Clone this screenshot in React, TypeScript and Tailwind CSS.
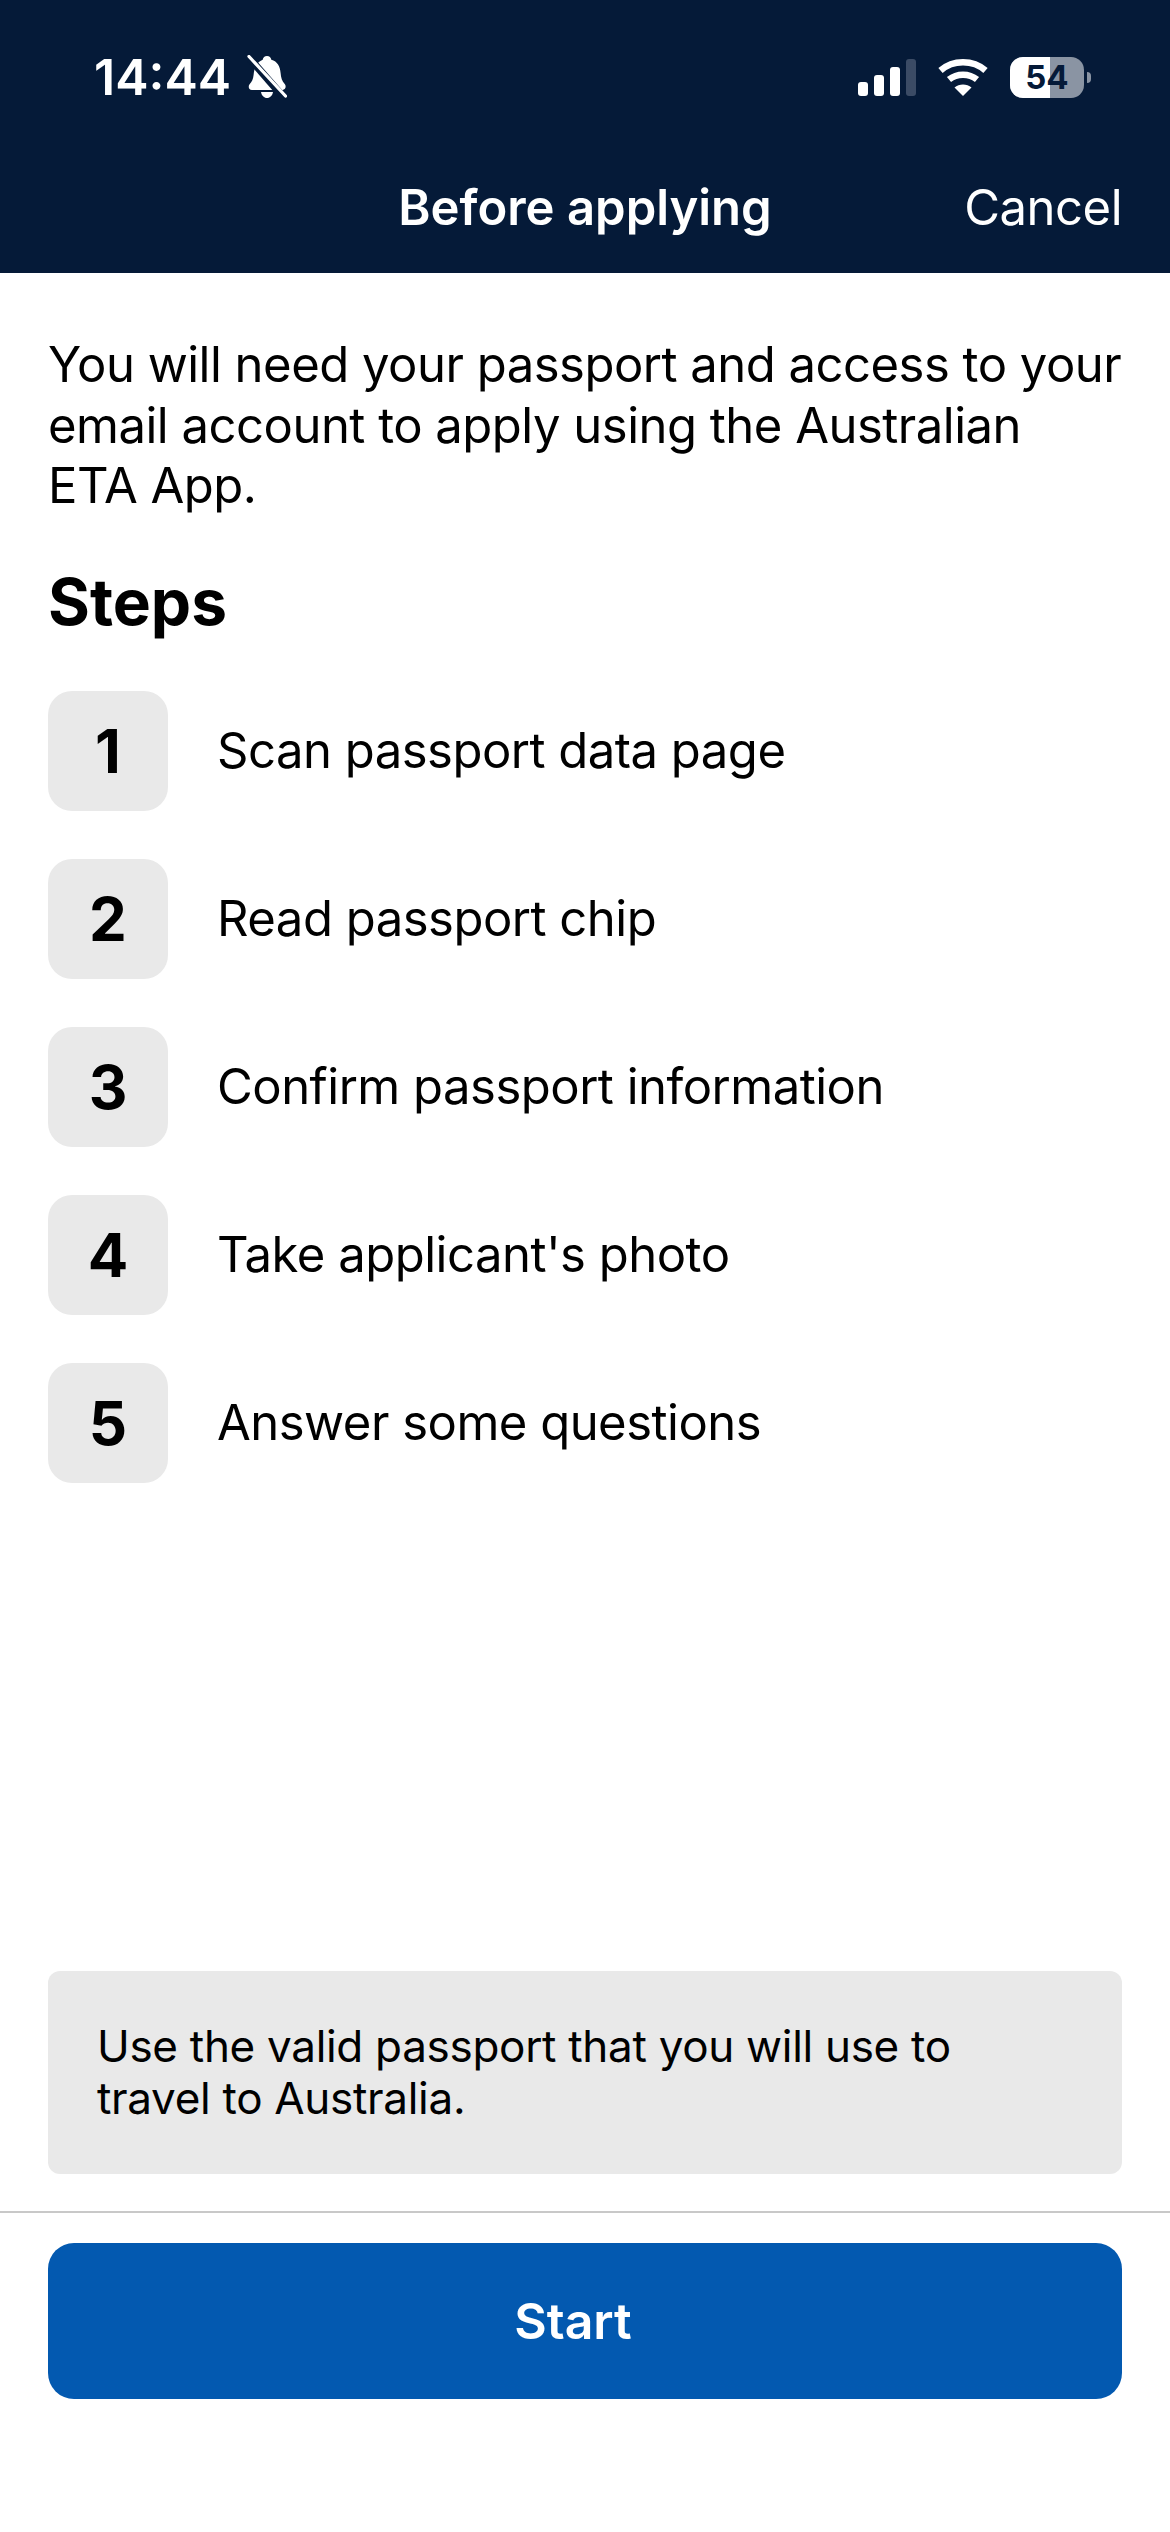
import React from 'react';

const steps = [
  'Scan passport data page',
  'Read passport chip',
  'Confirm passport information',
  "Take applicant's photo",
  'Answer some questions',
];

function BellSlash() {
  return (
    <svg width="40" height="44" viewBox="0 0 40 44" fill="none">
      <path
        d="M20 1c2.400 0 4 1.700 4.300 3.800C30.500 6.400 33 11.500 33.600 18c.4 4.600 1.300 8.200 4.300 11.300 1.300 1.400 1.100 5.700-2.400 5.700H5c-3.500 0-4-4-2.400-5.700 2.400-2.500 3.500-5.500 4-9.300 .6-7 3-12.800 9.100-15.200C16 2.700 17.600 1 20 1z"
        fill="#ffffff"
      />
      <path d="M14 37h12c-.6 3.500-3 6-6 6s-5.400-2.500-6-6z" fill="#ffffff" />
      <path d="M-2 -2 L38 44" stroke="#051a38" strokeWidth="7.500" />
      <path d="M2 1.500 L38.500 41" stroke="#ffffff" strokeWidth="3.200" strokeLinecap="round" />
    </svg>
  );
}

function SignalBars() {
  return (
    <svg width="58" height="37" viewBox="0 0 58 37">
      <rect x="0" y="23" width="10" height="14" rx="3" fill="#ffffff" />
      <rect x="16" y="16" width="10" height="21" rx="3" fill="#ffffff" />
      <rect x="32" y="8" width="10" height="29" rx="3" fill="#ffffff" />
      <rect x="48" y="0" width="10" height="37" rx="3" fill="#3b4b65" />
    </svg>
  );
}

function Wifi() {
  return (
    <svg width="50" height="38" viewBox="0 0 50 38" fill="none">
      <path d="M2.500 12.500C15 1.500 35 1.500 47.500 12.500" stroke="#ffffff" strokeWidth="6.500" strokeLinecap="butt" />
      <path d="M11 21.500C19 15 31 15 39 21.500" stroke="#ffffff" strokeWidth="6.500" strokeLinecap="butt" />
      <path d="M25 38 L16.500 29.500C21 25.500 29 25.500 33.500 29.500Z" fill="#ffffff" />
    </svg>
  );
}

function Battery() {
  return (
    <div className="flex items-center gap-[3px]">
      <div className="relative flex h-[41px] w-[74px] items-center justify-center overflow-hidden rounded-[13px] bg-[#8a94a3]">
        <div className="absolute inset-y-0 left-0 w-[40px] bg-white" />
        <span className="relative text-[33px] font-bold leading-none text-[#051a38]">54</span>
      </div>
      <div className="h-[11px] w-[4px] rounded-r-full bg-[#8a94a3]" />
    </div>
  );
}

export default function App() {
  return (
    <div className="flex h-[2532px] w-[1170px] flex-col overflow-hidden bg-white font-['Inter',sans-serif] text-black">
      {/* Header */}
      <header className="h-[273px] bg-[#051a38] text-white">
        <div className="flex h-[154px] items-center justify-between pl-[94px] pr-[79px]">
          <div className="flex items-center gap-[16px]">
            <span className="text-[50px] font-semibold leading-none">14:44</span>
            <BellSlash />
          </div>
          <div className="flex items-center gap-[22px]">
            <SignalBars />
            <Wifi />
            <Battery />
          </div>
        </div>
        <div className="grid h-[106px] grid-cols-[1fr_auto_1fr] items-center px-[48px]">
          <div />
          <h1 className="text-[49px] font-semibold leading-none">Before applying</h1>
          <button className="justify-self-end text-[49px] leading-none tracking-[-0.5px]">Cancel</button>
        </div>
      </header>

      {/* Content */}
      <main className="flex flex-1 flex-col px-[48px] pt-[62px]">
        <p className="text-[49px] leading-[60.500px] tracking-[-0.5px]">
          You will need your passport and access to your email account to apply using the Australian
          <br />
          ETA App.
        </p>
        <h2 className="mt-[45px] text-[64px] font-bold leading-[80px]">Steps</h2>
        <ul className="mt-[49px] flex flex-col gap-[48px]">
          {steps.map((step, i) => (
            <li key={step} className="flex items-center gap-[49px]">
              <div className="flex h-[120px] w-[120px] items-center justify-center rounded-[24px] bg-[#e9e9e9] text-[60px] font-bold">
                {i + 1}
              </div>
              <span className="text-[49px] tracking-[-0.5px]">{step}</span>
            </li>
          ))}
        </ul>
        <div className="mt-auto mb-[37px] rounded-[12px] bg-[#e9e9e9] px-[49px] pt-[49px] pb-[50px] text-[44px] leading-[52px] tracking-[-0.3px]">
          Use the valid passport that you will use to travel to Australia.
        </div>
      </main>

      {/* Footer */}
      <footer className="h-[321px] border-t-[2px] border-[#c8c8c8] px-[48px] pt-[30px]">
        <button className="flex h-[156px] w-full items-center justify-center rounded-[26px] bg-[#0359b0] pr-[24px] text-[50px] font-semibold text-white">
          Start
        </button>
      </footer>
    </div>
  );
}
